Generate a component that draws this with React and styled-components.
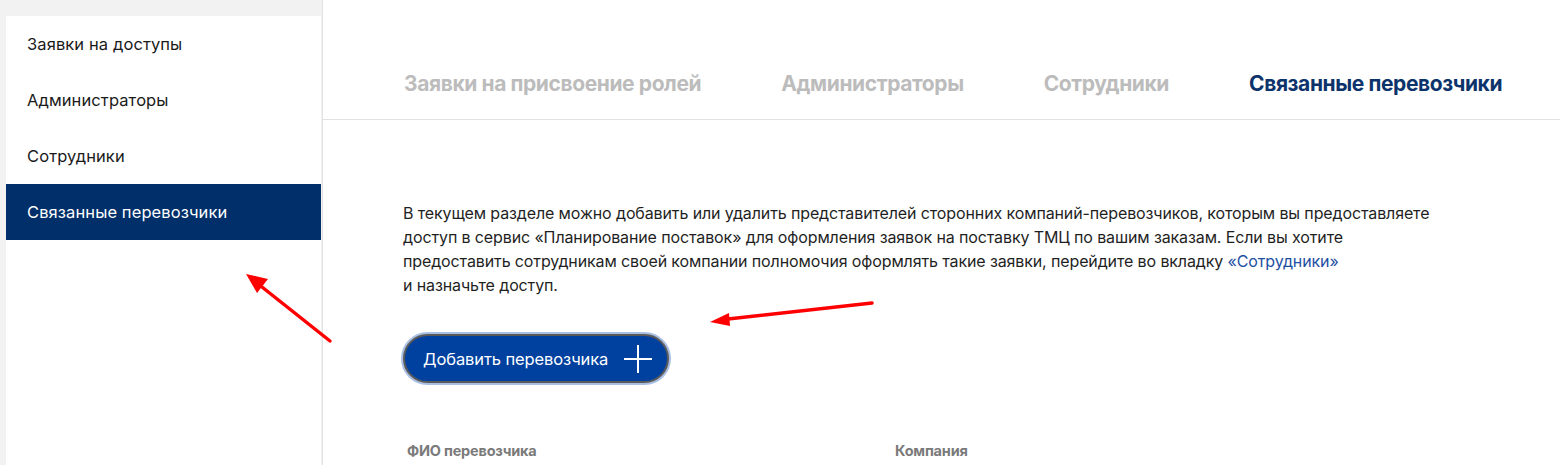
import React from "react";
import styled, { createGlobalStyle } from "styled-components";

const Global = createGlobalStyle`
  html, body { margin: 0; padding: 0; background: #fff; }
  body { font-family: Inter, "Noto Sans", Arial, sans-serif; color: #1f1f1f; }
  * { box-sizing: border-box; }
`;

const Page = styled.div`
  position: relative;
  display: flex;
  width: 1560px;
  height: 465px;
  overflow: hidden;
  background: #fff;
`;

const Sidebar = styled.aside`
  flex: 0 0 323px;
  display: flex;
  flex-direction: column;
  background: #f2f2f2;
  padding: 16px 1px 0 6px;
  border-right: 1px solid #e2e2e2;
`;

const SideList = styled.nav`
  flex: 1;
  display: flex;
  flex-direction: column;
  background: #fff;
`;

const SideItem = styled.div`
  height: 56px;
  display: flex;
  align-items: center;
  padding-left: 21px;
  font-size: 16.5px;
  letter-spacing: 0.1px;
  color: ${(p) => (p.$active ? "#fff" : "#1a1a1a")};
  background: ${(p) => (p.$active ? "#002f69" : "#fff")};
`;

const Main = styled.main`
  flex: 1;
  display: flex;
  flex-direction: column;
`;

const Tabs = styled.div`
  height: 120px;
  display: flex;
  align-items: flex-end;
  gap: 80px;
  padding: 0 0 22px 81px;
  border-bottom: 1px solid #e2e2e2;
`;

const Tab = styled.div`
  font-size: 21px;
  font-weight: 700;
  line-height: 26px;
  letter-spacing: -0.4px;
  color: ${(p) => (p.$active ? "#0c336b" : "#bcbcbc")};
`;

const Content = styled.section`
  padding: 81px 0 0 80px;
  display: flex;
  flex-direction: column;
  align-items: flex-start;
`;

const Text = styled.p`
  margin: 0;
  font-size: 16px;
  line-height: 24px;
  letter-spacing: -0.12px;
  color: #1f1f1f;
`;

const Link = styled.a`
  color: #1d4fa3;
  text-decoration: none;
`;

const AddButton = styled.button`
  margin-top: 37px;
  height: 49px;
  width: 266px;
  display: flex;
  align-items: center;
  justify-content: space-between;
  padding: 0 14px 0 18px;
  border-radius: 25px;
  border: 2px solid #5a5a5a;
  box-shadow: 0 0 0 2px #a9bfe3;
  background: #0041a0;
  color: #fff;
  font-family: inherit;
  font-size: 16.5px;
  letter-spacing: -0.1px;
  cursor: pointer;
`;

const TableHead = styled.div`
  margin-top: 59px;
  display: grid;
  grid-template-columns: 488px 300px;
  padding-left: 4px;
`;

const HeadCell = styled.div`
  font-size: 14.5px;
  font-weight: 700;
  line-height: 18px;
  letter-spacing: -0.2px;
  color: #7a7a7a;
`;

const Overlay = styled.svg`
  position: absolute;
  left: 0;
  top: 0;
  pointer-events: none;
`;

const Plus = () => (
  <svg width="30" height="30" viewBox="0 0 30 30">
    <path d="M15 1v28M1 15h28" stroke="#fff" strokeWidth="2" />
  </svg>
);

export default function App() {
  const side = ["Заявки на доступы", "Администраторы", "Сотрудники", "Связанные перевозчики"];
  const tabs = ["Заявки на присвоение ролей", "Администраторы", "Сотрудники", "Связанные перевозчики"];
  return (
    <Page>
      <Global />
      <Sidebar>
        <SideList>
          {side.map((s, i) => (
            <SideItem key={s} $active={i === 3}>{s}</SideItem>
          ))}
        </SideList>
      </Sidebar>
      <Main>
        <Tabs>
          {tabs.map((t, i) => (
            <Tab key={t} $active={i === 3}>{t}</Tab>
          ))}
        </Tabs>
        <Content>
          <Text>
            В текущем разделе можно добавить или удалить представителей сторонних компаний-перевозчиков, которым вы предоставляете
            <br />
            доступ в сервис «Планирование поставок» для оформления заявок на поставку ТМЦ по вашим заказам. Если вы хотите
            <br />
            предоставить сотрудникам своей компании полномочия оформлять такие заявки, перейдите во вкладку <Link href="#">«Сотрудники»</Link>
            <br />
            и назначьте доступ.
          </Text>
          <AddButton>
            <span>Добавить перевозчика</span>
            <Plus />
          </AddButton>
          <TableHead>
            <HeadCell>ФИО перевозчика</HeadCell>
            <HeadCell>Компания</HeadCell>
          </TableHead>
        </Content>
      </Main>
      <Overlay width="1560" height="465" viewBox="0 0 1560 465">
        <line x1="330" y1="341" x2="262" y2="287" stroke="#ff0000" strokeWidth="3.5" strokeLinecap="round" />
        <polygon points="246,274 268,279 257,293" fill="#ff0000" />
        <line x1="872" y1="303" x2="728" y2="319" stroke="#ff0000" strokeWidth="3.5" strokeLinecap="round" />
        <polygon points="710,322 729,313 730,326" fill="#ff0000" />
      </Overlay>
    </Page>
  );
}
